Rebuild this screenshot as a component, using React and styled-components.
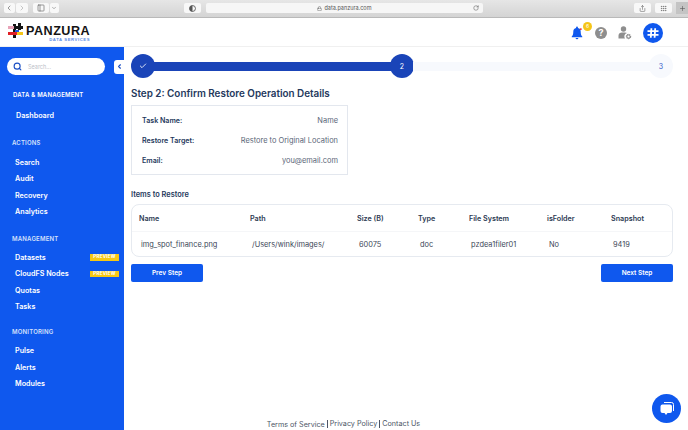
import React from 'react'
import styled, { createGlobalStyle } from 'styled-components'
import { ChevronLeft, ChevronRight, Search, RotateCw, Share, Lock, Check, Plus, ChevronDown, PanelLeft, Grip } from 'lucide-react'

const GlobalStyle = createGlobalStyle`
    html, body { margin: 0; padding: 0; background: white; }
    body { font-family: Inter, "Open Sans", sans-serif; color: #2b3a55; }
    * { box-sizing: border-box; }
`

const Page = styled.div`
    width: 688px;
    height: 430px;
    display: flex;
    flex-direction: column;
    overflow: hidden;
`

const Chrome = styled.div`
    height: 18px;
    flex: none;
    display: flex;
    align-items: center;
    padding: 0 0 1px 4px;
    background: linear-gradient(#e6e6e6, #d4d4d4);
    border-bottom: 1px solid #b9b9b9;
`
const ChromeBtn = styled.div`
    width: ${props => props.w || 12}px;
    height: 10px;
    margin-left: ${props => props.ml || 0}px;
    background: #f8f8f8;
    border-radius: 2px;
    display: flex;
    align-items: center;
    justify-content: center;
    color: #666;
`
const UrlBar = styled.div`
    width: 278px;
    height: 10px;
    margin-left: 5px;
    background: #f6f6f6;
    border-radius: 2px;
    display: flex;
    align-items: center;
    justify-content: center;
    gap: 2px;
    font-size: 5.5px;
    color: #555;
    position: relative;
    svg:last-child {
        position: absolute;
        right: 4px;
    }
`
const NewTab = styled.div`
    width: 12px;
    height: 12px;
    margin-left: 4px;
    background: #c4c4c4;
    display: flex;
    align-items: center;
    justify-content: center;
    color: #555;
`

const Header = styled.header`
    height: 29px;
    flex: none;
    display: flex;
    align-items: center;
    justify-content: space-between;
    padding: 1px 25px 0 8px;
    background: white;
    border-bottom: 1px solid #f0f0f0;
`
const Logo = styled.div`
    display: flex;
    align-items: flex-start;
    gap: 2px;
`
const LogoText = styled.div`
    display: flex;
    flex-direction: column;
    align-items: flex-end;
    padding-top: 2px;
    font-family: "Liberation Sans", sans-serif;
`
const LogoName = styled.span`
    font-size: 12.6px;
    line-height: 12px;
    font-weight: 700;
    letter-spacing: .5px;
    color: #141414;
`
const LogoSub = styled.span`
    font-size: 4.2px;
    line-height: 5px;
    letter-spacing: .6px;
    font-weight: 700;
    color: #5b8de8;
`
const HeaderIcons = styled.div`
    display: flex;
    align-items: center;
    gap: 11px;
`
const BellWrap = styled.div`
    position: relative;
    width: 12px;
    height: 14px;
    margin-right: 1px;
    display: flex;
`
const Badge = styled.span`
    position: absolute;
    top: -4px;
    right: -9px;
    width: 9px;
    height: 9px;
    border-radius: 50%;
    background: #f5c518;
    color: white;
    font-size: 5px;
    line-height: 9px;
    text-align: center;
`
const HelpIcon = styled.div`
    width: 12px;
    height: 12px;
    border-radius: 50%;
    background: #8e8e8e;
    color: white;
    font-size: 9px;
    font-weight: 700;
    line-height: 12px;
    text-align: center;
`
const Avatar = styled.div`
    width: 20px;
    height: 20px;
    border-radius: 50%;
    background: #0f58ee;
    display: flex;
    align-items: center;
    justify-content: center;
`

const Body = styled.div`
    flex: 1;
    display: flex;
    min-height: 0;
`

const Sidebar = styled.aside`
    width: 124px;
    flex: none;
    background: #0f58ee;
    padding-top: 11px;
    color: white;
`
const SearchRow = styled.div`
    display: flex;
    align-items: center;
    padding-left: 7px;
    height: 17px;
    margin-bottom: 15px;
`
const SearchBox = styled.div`
    width: 98px;
    height: 17px;
    border-radius: 9px;
    background: white;
    display: flex;
    align-items: center;
    gap: 6px;
    padding-left: 6px;
    font-size: 5.5px;
    color: #bcc0c8;
    svg { color: #1a4fc4; }
`
const Collapse = styled.div`
    width: 10px;
    height: 14px;
    margin-left: 9px;
    background: white;
    border-radius: 3px 0 0 3px;
    display: flex;
    align-items: center;
    justify-content: center;
    color: #1a4fc4;
`
const SectionTitle = styled.div`
    font-size: 6px;
    line-height: 10px;
    font-weight: 600;
    letter-spacing: .2px;
    padding-left: ${props => props.pl || 12}px;
    margin-top: ${props => props.mt || 0}px;
    margin-bottom: ${props => props.mb || 6}px;
    color: ${props => props.light ? '#ffffff' : '#d4e0fb'};
`
const NavItem = styled.div`
    height: 16.3px;
    display: flex;
    align-items: center;
    justify-content: space-between;
    padding: 0 5px 0 ${props => props.pl || 15}px;
    font-size: 7.2px;
    font-weight: 600;
`
const Preview = styled.span`
    width: 29px;
    height: 6.5px;
    background: #f7c815;
    color: white;
    font-size: 4.6px;
    line-height: 6.5px;
    font-weight: 700;
    text-align: center;
    letter-spacing: .2px;
`

const Main = styled.main`
    flex: 1;
    display: flex;
    flex-direction: column;
    padding: 7px 15px 0 7px;
    position: relative;
    min-width: 0;
`

const Stepper = styled.div`
    display: flex;
    align-items: center;
    height: 24px;
`
const Circle = styled.div`
    width: 24px;
    height: 24px;
    flex: none;
    border-radius: 50%;
    background: ${props => props.todo ? '#f7f9fd' : '#1a44b8'};
    color: ${props => props.todo ? '#3559c8' : 'white'};
    font-size: 7px;
    display: flex;
    align-items: center;
    justify-content: center;
`
const StepBar = styled.div`
    flex: 1;
    height: 9px;
    margin: 0 -1px;
    background: ${props => props.todo ? '#f7f9fd' : '#1a44b8'};
`

const Title = styled.h2`
    margin: 8px 0 5px;
    font-size: 9.9px;
    line-height: 14px;
    font-weight: 600;
    color: #24385c;
`

const DetailCard = styled.div`
    width: 217px;
    height: 70px;
    padding: 5px 9px 4px 10px;
    border: 1px solid #e3e7ee;
    display: flex;
    flex-direction: column;
    justify-content: space-between;
`
const DetailRow = styled.div`
    height: 19px;
    display: flex;
    align-items: center;
    justify-content: space-between;
    font-size: 7.45px;
    color: #5a6678;
    b {
        font-size: 7.1px;
        font-weight: 600;
        color: #24385c;
    }
`

const SubTitle = styled.h3`
    margin: 15px 0 4px;
    font-size: 7.4px;
    line-height: 10px;
    font-weight: 600;
    color: #24385c;
`

const TableWrap = styled.div`
    height: 53px;
    border: 1px solid #e6eaf0;
    border-radius: 8px;
    display: flex;
    flex-direction: column;
`
const Row = styled.div`
    flex: ${props => props.head ? '0 0 27px' : '1'};
    display: grid;
    grid-template-columns: 111px 107px 61px 51px 78px 64px 1fr;
    align-items: center;
    padding-left: ${props => props.head ? 7 : 9}px;
    font-size: ${props => props.head ? 7.2 : 7.4}px;
    font-weight: ${props => props.head ? 600 : 400};
    color: ${props => props.head ? '#2c3a52' : '#3d4758'};
    border-bottom: ${props => props.head ? '1px solid #f5f6f8' : 'none'};
`

const Actions = styled.div`
    display: flex;
    justify-content: space-between;
    margin-top: 7px;
`
const Button = styled.button`
    width: 72px;
    height: 18px;
    padding: 0;
    border: none;
    border-radius: 2px;
    background: #0f58ee;
    color: white;
    font-family: inherit;
    font-size: 6.5px;
    font-weight: 600;
`

const Footer = styled.footer`
    margin-top: auto;
    height: 12px;
    display: flex;
    justify-content: center;
    align-items: center;
    gap: 2px;
    font-size: 7.2px;
    color: #4c5666;
    padding-right: 117px;
    span + span {
        border-left: 1px solid #4c5666;
        padding-left: 2px;
        line-height: 8px;
    }
`
const ChatButton = styled.div`
    position: absolute;
    right: 7px;
    bottom: 7px;
    width: 29px;
    height: 29px;
    border-radius: 50%;
    background: #0f58ee;
    display: flex;
    align-items: center;
    justify-content: center;
`

const sections = [
    { title: 'ACTIONS', mt: 15, items: ['Search', 'Audit', 'Recovery', 'Analytics'] },
    { title: 'MANAGEMENT', mt: 15, mb: 5, items: ['Datasets', 'CloudFS Nodes', 'Quotas', 'Tasks'], preview: ['Datasets', 'CloudFS Nodes'] },
    { title: 'MONITORING', mt: 12, items: ['Pulse', 'Alerts', 'Modules'] },
]

const columns = ['Name', 'Path', 'Size (B)', 'Type', 'File System', 'isFolder', 'Snapshot']
const values = ['img_spot_finance.png', '/Users/wink/images/', '60075', 'doc', 'pzdea1filer01', 'No', '9419']

const PanzuraMark = () => (
    <svg width="16" height="16" viewBox="0 0 16 16">
        <rect x="5" y="1" width="3" height="14" fill="#141414" />
        <rect x="10" y="0" width="3" height="7" fill="#141414" />
        <rect x="0" y="3" width="6" height="3" fill="#e8a3b8" />
        <rect x="8" y="3" width="7" height="3" fill="#141414" />
        <rect x="0" y="9" width="9" height="3" fill="#e01f26" />
        <rect x="9" y="9" width="6" height="3" fill="#f5c518" />
        <rect x="7" y="7" width="4" height="2" fill="#1f5be0" />
    </svg>
)

const BellIcon = () => (
    <svg width="13" height="14" viewBox="0 0 13 14">
        <path d="M6.5 0a1 1 0 0 1 1 1v.6A4 4 0 0 1 10.5 5.5c0 3 .6 4.3 1.7 5.3v.7H.8v-.7C1.9 9.8 2.5 8.5 2.5 5.5A4 4 0 0 1 5.5 1.6V1a1 1 0 0 1 1-1z" fill="#0f58ee" />
        <path d="M5 12.3h3a1.5 1.5 0 0 1-3 0z" fill="#0f58ee" />
        <rect x="9.5" y="2" width="2" height="1.6" fill="#e01f26" />
    </svg>
)

const UserGearIcon = () => (
    <svg width="14" height="14" viewBox="0 0 14 14" fill="#8e8e8e">
        <circle cx="5.5" cy="3" r="2.7" />
        <path d="M.5 12.5V9.500C.5 7.500 2 6.500 4 6.500h3c.8 0 1.400.2 2 .5A3.500 3.500 0 0 0 7 12.500z" />
        <circle cx="10.5" cy="10.5" r="2" fill="none" stroke="#8e8e8e" strokeWidth="1.4" strokeDasharray="1.3 .5" />
        <circle cx="10.5" cy="10.5" r="1.5" fill="none" stroke="#8e8e8e" strokeWidth=".8" />
    </svg>
)

const App = () => {
    return (
        <Page>
            <GlobalStyle />
            <Chrome>
                <ChromeBtn w={11}><ChevronLeft size={8} /></ChromeBtn>
                <ChromeBtn w={12} ml={1}><ChevronRight size={8} color="#aaa" /></ChromeBtn>
                <ChromeBtn w={16} ml={5}><PanelLeft size={8} /></ChromeBtn>
                <ChromeBtn w={9} ml={1}><ChevronDown size={6} /></ChromeBtn>
                <ChromeBtn w={17} ml={125}>
                    <svg width="7" height="7" viewBox="0 0 8 8"><circle cx="4" cy="4" r="3.4" fill="none" stroke="#555" /><path d="M4 .6a3.4 3.4 0 0 0 0 6.8z" fill="#555" /></svg>
                </ChromeBtn>
                <UrlBar>
                    <Lock size={5} />
                    data.panzura.com
                    <RotateCw size={6} />
                </UrlBar>
                <ChromeBtn w={17} ml={151}><Share size={7} /></ChromeBtn>
                <ChromeBtn w={17} ml={4}><Grip size={7} /></ChromeBtn>
                <NewTab><Plus size={7} /></NewTab>
            </Chrome>

            <Header>
                <Logo>
                    <PanzuraMark />
                    <LogoText>
                        <LogoName>PANZURA</LogoName>
                        <LogoSub>DATA SERVICES</LogoSub>
                    </LogoText>
                </Logo>
                <HeaderIcons>
                    <BellWrap>
                        <BellIcon />
                        <Badge>6</Badge>
                    </BellWrap>
                    <HelpIcon>?</HelpIcon>
                    <UserGearIcon />
                    <Avatar>
                        <svg width="12" height="12" viewBox="0 0 12 12" stroke="white" strokeWidth="1.8" fill="none"><path d="M.5 4.2h11M.5 7.8h11M4.4 1.2 3.8 10.8M8.2 1.2 7.600 10.800" /></svg>
                    </Avatar>
                </HeaderIcons>
            </Header>

            <Body>
                <Sidebar>
                    <SearchRow>
                        <SearchBox>
                            <Search size={9} strokeWidth={3} />
                            Search...
                        </SearchBox>
                        <Collapse><ChevronLeft size={7} strokeWidth={4} /></Collapse>
                    </SearchRow>
                    <SectionTitle pl={13} mb={7} light>DATA &amp; MANAGEMENT</SectionTitle>
                    <NavItem pl={16}>Dashboard</NavItem>
                    {sections.map(section => (
                        <div key={section.title}>
                            <SectionTitle mt={section.mt} mb={section.mb}>{section.title}</SectionTitle>
                            {section.items.map(item => (
                                <NavItem key={item}>
                                    {item}
                                    {section.preview && section.preview.includes(item) && <Preview>PREVIEW</Preview>}
                                </NavItem>
                            ))}
                        </div>
                    ))}
                </Sidebar>

                <Main>
                    <Stepper>
                        <Circle><Check size={8} strokeWidth={2.5} /></Circle>
                        <StepBar />
                        <Circle>2</Circle>
                        <StepBar todo />
                        <Circle todo>3</Circle>
                    </Stepper>
                    <Title>Step 2: Confirm Restore Operation Details</Title>
                    <DetailCard>
                        <DetailRow><b>Task Name:</b>Name</DetailRow>
                        <DetailRow><b>Restore Target:</b>Restore to Original Location</DetailRow>
                        <DetailRow><b>Email:</b>you@email.com</DetailRow>
                    </DetailCard>
                    <SubTitle>Items to Restore</SubTitle>
                    <TableWrap>
                        <Row head>
                            {columns.map(col => <div key={col}>{col}</div>)}
                        </Row>
                        <Row>
                            {values.map(val => <div key={val}>{val}</div>)}
                        </Row>
                    </TableWrap>
                    <Actions>
                        <Button>Prev Step</Button>
                        <Button>Next Step</Button>
                    </Actions>
                    <Footer>
                        <span>Terms of Service</span>
                        <span>Privacy Policy</span>
                        <span>Contact Us</span>
                    </Footer>
                    <ChatButton>
                        <svg width="16" height="16" viewBox="0 0 16 16" fill="none">
                            <path d="M5 1.5h7.5a2 2 0 0 1 2 2V10" stroke="white" strokeWidth="1" />
                            <path d="M3.5 3.5H11a2 2 0 0 1 2 2V10a2 2 0 0 1-2 2H8.5L7 14l-1.5-2h-2a2 2 0 0 1-2-2V5.500a2 2 0 0 1 2-2z" fill="white" />
                        </svg>
                    </ChatButton>
                </Main>
            </Body>
        </Page>
    )
}

export default App
